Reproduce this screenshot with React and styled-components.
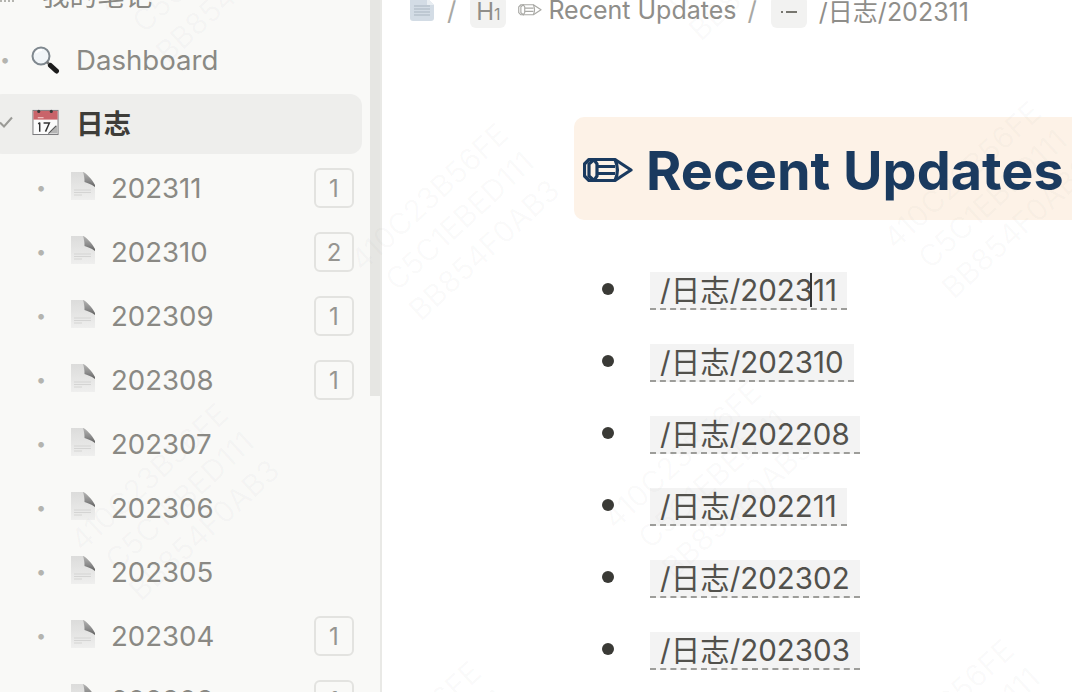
import React from "react";
import styled, { createGlobalStyle } from "styled-components";

const months = [
  { name: "202311", count: 1 },
  { name: "202310", count: 2 },
  { name: "202309", count: 1 },
  { name: "202308", count: 1 },
  { name: "202307" },
  { name: "202306" },
  { name: "202305" },
  { name: "202304", count: 1 },
  { name: "202303", count: 1 }
];

const links = [
  "/日志/202311",
  "/日志/202310",
  "/日志/202208",
  "/日志/202211",
  "/日志/202302",
  "/日志/202303"
];

// where the top line of each watermark tile ends
const marks = [
  [237, -143],
  [490, 115],
  [210, 395],
  [743, 373],
  [1023, 93],
  [463, 653],
  [996, 631],
  [770, -165]
];

const Magnifier = () => (
  <svg width="30" height="30" viewBox="0 0 30 30">
    <circle cx="11" cy="11" r="8.5" fill="#f1f5f8" stroke="#7f888f" strokeWidth="2" />
    <path d="M6 8 A6.5 6.5 0 0 1 12 5" fill="none" stroke="#fff" strokeWidth="2" />
    <path d="M17 17 L20 20" stroke="#777" strokeWidth="2.5" />
    <path d="M20.500 20.500 L26.500 26" stroke="#1c1c1c" strokeWidth="5" strokeLinecap="round" />
  </svg>
);

const Calendar = () => (
  <svg width="27" height="28" viewBox="0 0 28 28">
    <rect x="1" y="2" width="26" height="25" fill="#fbfbfb" stroke="#77777a" strokeWidth="1" />
    <rect x="1.500" y="2.500" width="25" height="9" fill="#c9646a" />
    <circle cx="7" cy="3" r="1.600" fill="#3a3a3a" />
    <circle cx="20" cy="3" r="1.600" fill="#3a3a3a" />
    <path d="M6 9.500h6" stroke="#eebbbb" strokeWidth="1.400" />
    <path d="M8 14.500 L6.500 16 M8 14.500 V24" stroke="#333" strokeWidth="1.500" fill="none" />
    <path d="M12 15h6 L14 24" stroke="#333" strokeWidth="1.500" fill="none" />
    <path d="M18 26 L26 17 V26 Z" fill="#b5b5b5" />
    <path d="M17 26 L25 18" stroke="#555" strokeWidth="1.200" />
  </svg>
);

const PageIcon = () => (
  <svg width="24" height="28" viewBox="0 0 24 28">
    <defs>
      <linearGradient id="sheet" x1="0" y1="0" x2="0" y2="1">
        <stop offset="0" stopColor="#dcdcdb" />
        <stop offset="0.55" stopColor="#e6e6e5" />
        <stop offset="1" stopColor="#efefee" />
      </linearGradient>
      <linearGradient id="curl" x1="0" y1="0" x2="0" y2="1">
        <stop offset="0" stopColor="#b5b5b4" />
        <stop offset="0.6" stopColor="#8a8a8a" />
        <stop offset="1" stopColor="#5e5e5e" />
      </linearGradient>
    </defs>
    <path d="M0 0 H13 L14 9 L24 14 V28 H0 Z" fill="url(#sheet)" />
    <path d="M12 0 C15 1 21 7 24 13 L24 15 C20 12 16 11 13.500 10 C13.500 6 13 3 12 0 Z" fill="url(#curl)" />
    <path d="M3 18h17M3 20.500h17M3 23h8" stroke="#d4d4d3" strokeWidth="1" />
  </svg>
);

const DocIcon = () => (
  <svg width="24" height="24" viewBox="0 0 24 24">
    <path d="M2 0 H17 L24 7 V20 Q24 23 21 23 H3 Q0 23 0 20 V2 Z" fill="#d3dce5" />
    <path d="M17 0 V7 H24 Z" fill="#e9eef2" />
    <path d="M4 8h16M4 11h16M4 14h16M4 17h16" stroke="#a9b5c0" strokeWidth="1" />
  </svg>
);

const Pencil = ({ size, color, strokeWidth }) => (
  <svg width={size} height={(size * 24) / 50} viewBox="0 0 50 24">
    <path
      d="M6 1.500 H32 L48 12 L32 22.500 H6 L1.500 18 V6 Z"
      fill="none"
      stroke={color}
      strokeWidth={strokeWidth}
      strokeLinejoin="round"
    />
    <path
      d="M11 1.500 L14 6 V18 L11 22.500 L6 18 V6 Z M14 8.500 H32 M14 15.500 H32 M32 1.500 C35 8 35 16 32 22.500"
      fill="none"
      stroke={color}
      strokeWidth={strokeWidth}
    />
  </svg>
);

export default function App() {
  return (
    <Page>
      <GlobalStyle />
      <Sidebar>
        <TreeRow $top>
          <TopMark />
          <RowLabel>我的笔记</RowLabel>
        </TreeRow>
        <TreeRow>
          <Bullet>•</Bullet>
          <Emoji>
            <Magnifier />
          </Emoji>
          <RowLabel>Dashboard</RowLabel>
        </TreeRow>
        <TreeRow $active>
          <Check viewBox="0 0 14 12">
            <path d="M1 6.500 L5 10.500 L13 1.500" fill="none" stroke="#9a9a96" strokeWidth="2" />
          </Check>
          <Emoji>
            <Calendar />
          </Emoji>
          <RowLabel $active>日志</RowLabel>
        </TreeRow>
        {months.map((month) => (
          <TreeRow key={month.name} $child>
            <Bullet>•</Bullet>
            <Emoji $child>
              <PageIcon />
            </Emoji>
            <RowLabel>{month.name}</RowLabel>
            {month.count && <Count>{month.count}</Count>}
          </TreeRow>
        ))}
        <ScrollThumb />
      </Sidebar>
      <Main>
        <Breadcrumb>
          <DocIcon />
          <Slash>/</Slash>
          <Chip>
            H<small>1</small>
          </Chip>
          <CrumbText>
            <Pencil size={24} color="#a9a9a5" strokeWidth={2.4} />
            Recent Updates
          </CrumbText>
          <Slash>/</Slash>
          <Chip>
            <ListGlyph />
          </Chip>
          <CrumbText>/日志/202311</CrumbText>
        </Breadcrumb>
        <Article>
          <Heading>
            <Pencil size={50} color="#1a3a5f" strokeWidth={3.2} />
            Recent Updates
          </Heading>
          <LinkList>
            {links.map((link, index) => (
              <LinkItem key={link}>
                <RefLink>
                  {index === 0 ? (
                    <>
                      /日志/2023
                      <Caret />
                      11
                    </>
                  ) : (
                    link
                  )}
                </RefLink>
              </LinkItem>
            ))}
          </LinkList>
        </Article>
      </Main>
      {marks.map(([x, y]) => (
        <Watermark key={`${x}-${y}`} style={{ left: x, top: y }}>
          <span>410C23B56FE</span>
          <span>C5C1EBED111</span>
          <span>BB854F0AB3</span>
        </Watermark>
      ))}
    </Page>
  );
}

const GlobalStyle = createGlobalStyle`
  html, body {
    margin: 0;
    height: 100%;
    overflow: hidden;
    background: #fff;
  }
  body {
    font-family: Inter, "Noto Sans CJK SC", sans-serif;
  }
`;

const Page = styled.div`
  position: relative;
  display: flex;
  width: 1072px;
  height: 692px;
  overflow: hidden;
`;

const Sidebar = styled.nav`
  position: relative;
  flex: 0 0 382px;
  box-sizing: border-box;
  height: 692px;
  padding: 0 18px 0 0;
  background: #f9f9f7;
  border-right: 2px solid #e9e9e6;
  overflow: hidden;
`;

const ScrollThumb = styled.div`
  position: absolute;
  top: 0;
  right: 0;
  width: 10px;
  height: 396px;
  background: #e6e6e3;
`;

const TreeRow = styled.div`
  display: flex;
  align-items: center;
  box-sizing: border-box;
  height: 60px;
  margin: 0 0 4px -10px;
  padding: 0 8px ${(props) => (props.$active || props.$top ? "4px" : "0")}
    ${(props) => (props.$child ? "46px" : "10px")};
  border-radius: 12px;
  background: ${(props) => (props.$active ? "#eeeeec" : "transparent")};

  &:first-child {
    margin-top: -34px;
  }
`;

const TopMark = styled.span`
  flex: 0 0 14px;
  height: 0;
  margin: 14px 28px 0 0;
  border-top: 2px dotted #b4b4af;
`;

const Bullet = styled.span`
  flex: 0 0 10px;
  width: 10px;
  margin-right: 20px;
  font-size: 18px;
  line-height: 1;
  text-align: center;
  color: #b4b4af;
`;

const Check = styled.svg`
  flex: 0 0 14px;
  width: 14px;
  height: 12px;
  margin-right: 17px;
  margin-left: -1px;
`;

const Emoji = styled.span`
  display: flex;
  flex: 0 0 30px;
  justify-content: center;
  width: 30px;
  margin-right: ${(props) => (props.$child ? "13px" : "16px")};
  margin-left: ${(props) => (props.$child ? "2px" : "0")};
  margin-top: ${(props) => (props.$child ? "-4px" : "0")};
`;

const RowLabel = styled.span`
  flex: 1;
  font-size: 27.600px;
  font-weight: ${(props) => (props.$active ? 700 : 400)};
  color: ${(props) => (props.$active ? "#3e3d39" : "#8a8984")};
  white-space: nowrap;
`;

const Count = styled.span`
  display: flex;
  align-items: center;
  justify-content: center;
  box-sizing: border-box;
  width: 40px;
  height: 40px;
  border: 2px solid #e3e3e0;
  border-radius: 6px;
  font-size: 24px;
  color: #969591;
`;

const Main = styled.main`
  flex: 1;
  min-width: 0;
  background: #fff;
  overflow: hidden;
`;

const Breadcrumb = styled.div`
  display: flex;
  align-items: center;
  height: 28px;
  margin-top: -4px;
  padding-left: 28px;
  font-size: 25px;
  color: #8f8e8a;
  white-space: nowrap;
`;

const Slash = styled.span`
  margin: 0 14px 0 13px;
  font-size: 26px;
  color: #a8a8a4;
`;

const Chip = styled.span`
  display: flex;
  align-items: center;
  justify-content: center;
  width: 36px;
  height: 32px;
  margin-top: 3px;
  border-radius: 6px;
  background: #f2f2f1;
  font-size: 24px;
  color: #8f8e8a;

  small {
    font-size: 16px;
    margin-top: 4px;
  }
`;

const ListGlyph = styled.span`
  display: block;
  width: 16px;
  height: 2px;
  background: linear-gradient(
    to right,
    #77766f 0 2px,
    transparent 2px 5px,
    #77766f 5px 100%
  );
`;

const CrumbText = styled.span`
  display: flex;
  align-items: center;
  gap: 6px;
  margin: 0 -2px 0 12px;
`;

const Article = styled.article`
  padding: 93px 0 0 192px;
`;

const Heading = styled.h1`
  display: flex;
  align-items: center;
  gap: 13px;
  box-sizing: border-box;
  width: 540px;
  height: 103px;
  margin: 0;
  padding: 3px 0 0 9px;
  border-radius: 10px;
  background: #fdf2e7;
  font-size: 54px;
  font-weight: 700;
  color: #1a3a5f;
  white-space: nowrap;
`;

const LinkList = styled.ul`
  margin: 52px 0 0;
  padding: 0 0 0 76px;
  list-style: none;
`;

const LinkItem = styled.li`
  position: relative;
  height: 72px;

  &::before {
    content: "";
    position: absolute;
    left: -48px;
    top: 11px;
    width: 12px;
    height: 12px;
    border-radius: 50%;
    background: #3a3a36;
  }
`;

const RefLink = styled.span`
  display: inline-block;
  height: 36px;
  padding: 0 10px 0 10px;
  background: #f3f3f3;
  border-bottom: 2px dashed #9d9d9a;
  font-size: 29.500px;
  line-height: 36px;
  color: #52514c;
  white-space: nowrap;
`;

const Caret = styled.span`
  display: inline-block;
  width: 2px;
  height: 34px;
  margin: 0 1px 0 -3px;
  vertical-align: -6px;
  background: #333;
`;

const Watermark = styled.div`
  position: absolute;
  display: flex;
  flex-direction: column;
  align-items: flex-end;
  width: 0;
  font-size: 30px;
  line-height: 38px;
  color: rgba(120, 120, 120, 0.035);
  transform: rotate(-42.5deg);
  transform-origin: 0 0;
  white-space: nowrap;
  pointer-events: none;
`;
